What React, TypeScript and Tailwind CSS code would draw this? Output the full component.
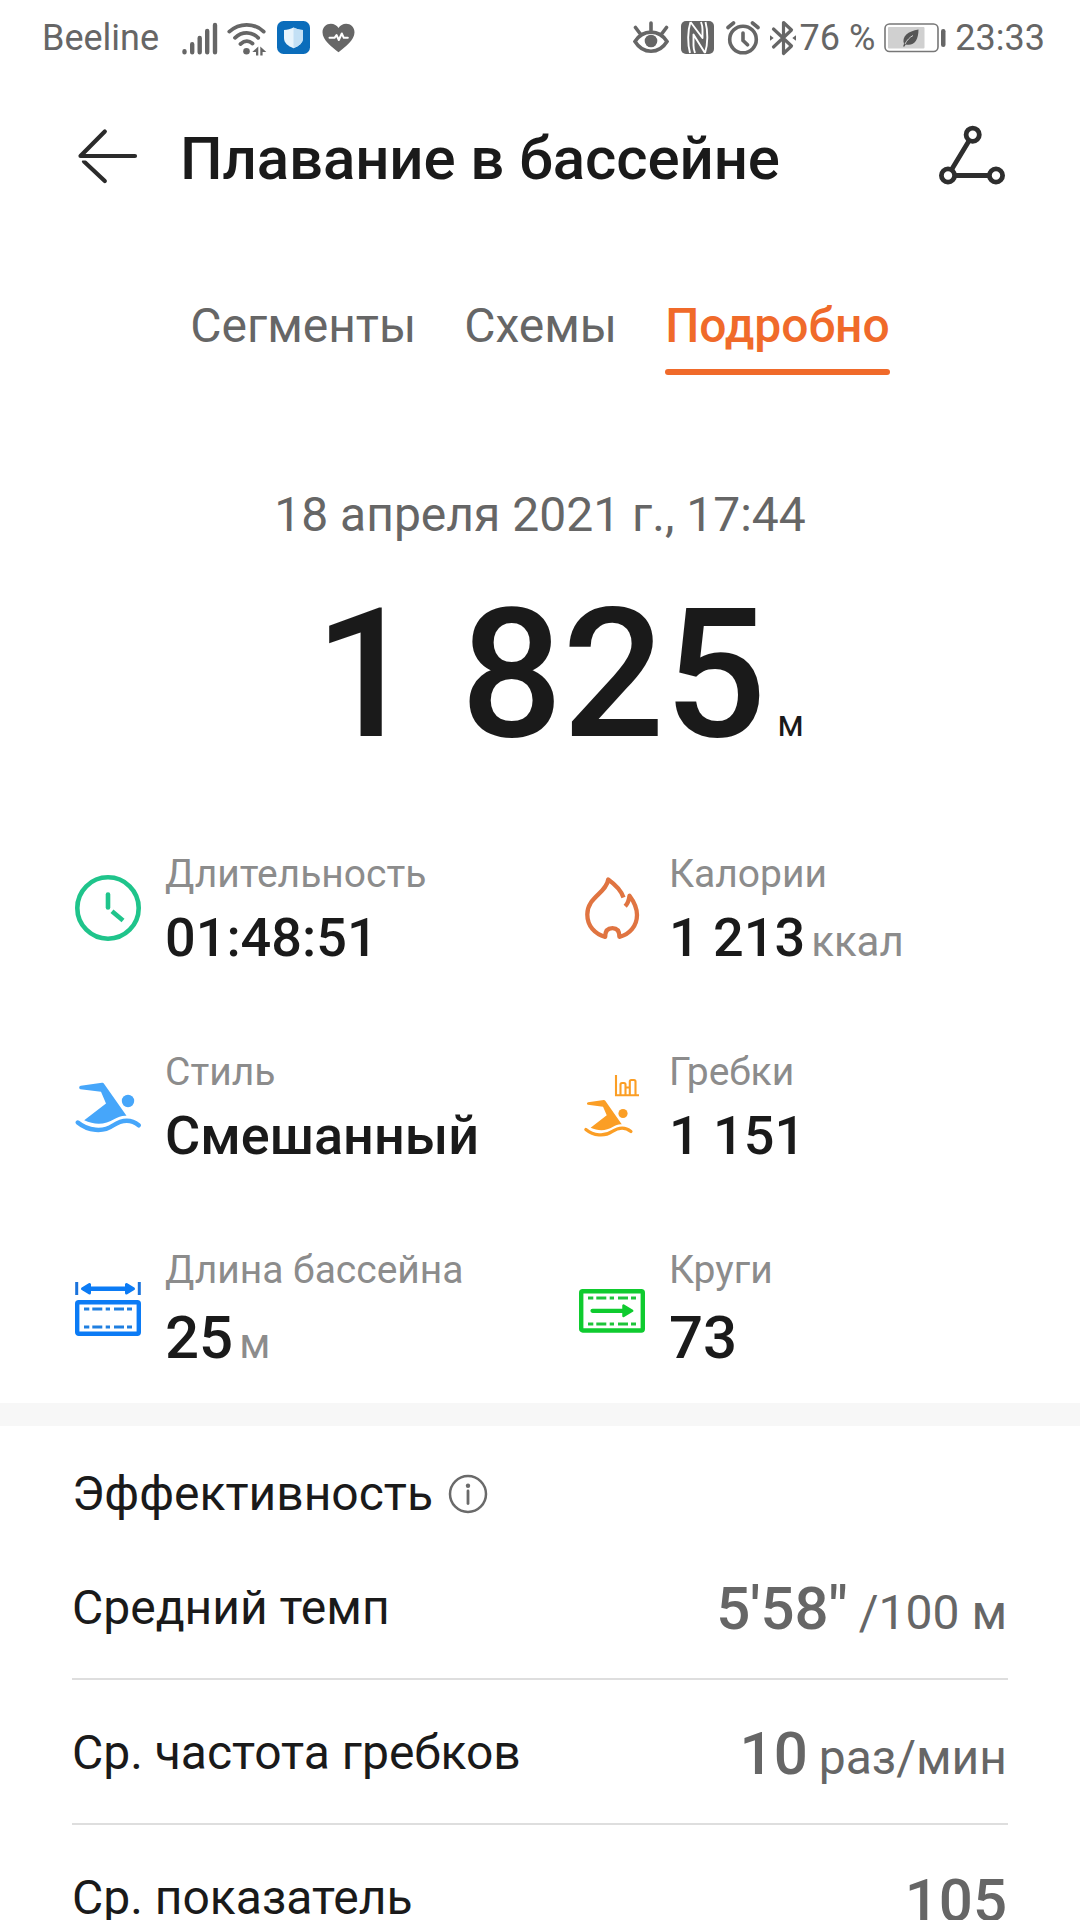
import type { ReactNode } from 'react';

const DASHES = [[9, 14.3], [17.3, 27.3], [30.7, 35], [39, 49], [52, 57]];

/* ---------- status bar icons ---------- */

function SignalIcon() {
  return (
    <svg width="36" height="36" viewBox="0 0 36 36" stroke="#666" strokeWidth="4.4" strokeLinecap="round">
      <path d="M2.5 32.2v-1M10.2 32.2v-8M17.7 32.2V18M25.2 32.2V11M33 32.2V5" />
    </svg>
  );
}

function WifiIcon() {
  return (
    <svg width="40" height="36" viewBox="0 0 40 36" fill="none" stroke="#666" strokeWidth="3.8" strokeLinecap="round">
      <path d="M2.3 11.6C12.5 2.500 27 2.500 36.700 11.600M8 17.800C15 11.200 24.500 11.200 31.200 17.800M13.500 24C17.500 20.500 22 20.500 25.500 23.500" />
      <circle cx="19.500" cy="31.300" r="3.300" fill="#666" stroke="none" />
      <path d="M25.300 32l6-5.500v9h-2.300v-3.500zM33.300 26.500l6 5.500h-3.700v3.500h-2.300z" fill="#666" stroke="none" />
    </svg>
  );
}

function ShieldIcon() {
  return (
    <svg width="33" height="33" viewBox="0 0 33 33">
      <rect width="33" height="33" rx="6.500" fill="#0b6dbb" />
      <path d="M16.500 6.500c3 1.600 6 2.300 9.500 2.600v8c0 5-4 8-9.500 10.200C11 25.100 7 22.100 7 17.100v-8c3.500-.300 6.500-1 9.500-2.600z" fill="#e8f4fc" />
      <path d="M16.500 6.500c3 1.600 6 2.300 9.500 2.600v8c0 5-4 8-9.500 10.200z" fill="#c3e0f5" />
    </svg>
  );
}

function HeartIcon() {
  return (
    <svg width="33" height="30" viewBox="0 0 33 30">
      <path d="M16.500 29.300C10 24 .500 17.500.500 9.300.500 4 4.500.800 8.800.800c3.300 0 6.200 1.700 7.700 4.300 1.500-2.600 4.400-4.300 7.700-4.300 4.300 0 8.300 3.200 8.300 8.500 0 8.200-9.500 14.700-16 20z" fill="#666" />
      <path d="M7.500 14.800h5l2-2.800 2.300 5 3-6.500 2 4.300h4" fill="none" stroke="#fff" strokeWidth="2" strokeLinejoin="round" strokeLinecap="round" />
    </svg>
  );
}

function EyeIcon() {
  return (
    <svg width="36" height="33" viewBox="0 0 36 33" fill="none" stroke="#666" strokeWidth="3.600" strokeLinecap="round">
      <path d="M2 20.500C10 8 26 8 34 20.500 26 33.500 10 33.500 2 20.500zM18 2v7M2.500 6.500l4.500 6M33.500 6.500l-4.500 6" />
      <circle cx="18" cy="20" r="6.300" fill="#666" stroke="none" />
    </svg>
  );
}

function NfcIcon() {
  return (
    <svg width="33" height="33" viewBox="0 0 33 33">
      <rect width="33" height="33" rx="5" fill="#666" />
      <g fill="none" stroke="#fff" strokeWidth="1.900" strokeLinejoin="round">
        <path d="M9.500 1C6.500 10 6.500 23 9 32M9.500 1L21.500 17V8.500C21.500 5.500 21 3.500 20 1" />
        <path d="M24 32C27 23 27 10 24.500 1M24 32L12.500 13.500V24.500C12.500 27.500 13 29.500 14 32" />
      </g>
    </svg>
  );
}

function AlarmIcon() {
  return (
    <svg width="34" height="34" viewBox="0 0 34 34" fill="none" stroke="#666" strokeWidth="3.600" strokeLinecap="round">
      <circle cx="17" cy="18.500" r="13.300" />
      <path d="M17 12v7.500l4.500 4.300M2 6.500L7.500 2M32 6.500L26.500 2" />
    </svg>
  );
}

function BluetoothIcon() {
  return (
    <svg width="28" height="36" viewBox="0 0 28 36" fill="none" stroke="#666" strokeWidth="3.200" strokeLinejoin="round">
      <path d="M4.500 9L22.500 26 14.500 33.500V2.500L22.500 10 4.500 27" strokeLinecap="round" />
      <path d="M1 15.200L4.700 18 1 20.800zM27 15.200L23.300 18 27 20.800z" fill="#666" stroke="none" />
    </svg>
  );
}

function BatteryIcon() {
  return (
    <svg width="62" height="30" viewBox="0 0 62 30">
      <rect x="1" y="1" width="53" height="27.500" rx="4.500" fill="none" stroke="#777" strokeWidth="1.600" />
      <rect x="4" y="4" width="36.500" height="21.500" rx="1" fill="#d0d0d0" />
      <rect x="57" y="6" width="4.500" height="18" rx="2.200" fill="#666" />
      <path d="M34.500 6.500C24 8.500 17.500 13 20 21l-1 2.500 1.500 0 1.200-2C30 23.500 34.500 17 34.500 6.500z" fill="#555" />
      <path d="M21 21c2-4 4.500-6.500 8-8.500" fill="none" stroke="#d0d0d0" strokeWidth="1" />
    </svg>
  );
}

/* ---------- header icons ---------- */

function BackIcon() {
  return (
    <svg width="60" height="56" viewBox="0 0 60 56" fill="none" stroke="#2b2b2b" strokeWidth="4.200" strokeLinecap="round">
      <path d="M57 28H2.500L26.800 3.500" strokeLinejoin="round" />
      <path d="M6 33.500l20.800 19.500" />
      <path d="M0 31.400h12" stroke="#fff" strokeWidth="2.200" strokeLinecap="butt" />
    </svg>
  );
}

function RouteIcon() {
  return (
    <svg width="68" height="60" viewBox="0 0 68 60" fill="none" stroke="#2e2e2e" strokeWidth="4.800">
      <circle cx="34.700" cy="9.700" r="6.600" />
      <circle cx="10" cy="50.500" r="6.600" />
      <circle cx="58" cy="50.500" r="6.600" />
      <path d="M31.200 15.500L13.500 44.700M16.500 50.500h35" />
    </svg>
  );
}

/* ---------- stat icons, all 66x66 ---------- */

function StatSvg({ children }: { children: ReactNode }) {
  return (
    <svg className="mt-[32px] shrink-0" width="66" height="66" viewBox="0 0 66 66" fill="none">
      {children}
    </svg>
  );
}

function Swimmer({ color }: { color: string }) {
  return (
    <>
      <path
        d="M5.800 12.700L27 9.800c1 0 1.500.200 2 .900L51.500 42.700c-5-.300-8 1-12 3.300-9.500 6-20 6-30.300 1.300L31 30.500 26 18.700 5.500 16.200c-1.800-.400-1.700-3.200.300-3.500z"
        fill={color}
      />
      <circle cx="53" cy="28" r="6.200" fill={color} />
      <path d="M2.800 49.500C13 58 28 59.500 38 52.500 48 46 56 46 63.700 52.300" stroke={color} strokeWidth="4.400" strokeLinecap="round" />
    </>
  );
}

function LaneDashes({ y, color }: { y: number; color: string }) {
  return (
    <>
      {DASHES.map(([from, to]) => (
        <path key={from} d={`M${from} ${y}H${to}`} stroke={color} strokeWidth="3" />
      ))}
    </>
  );
}

function ClockIcon() {
  return (
    <StatSvg>
      <circle cx="33" cy="33" r="30.700" stroke="#1fc48b" strokeWidth="4.600" />
      <path d="M33 19.500V32.500" stroke="#1fc48b" strokeWidth="4.600" strokeLinecap="round" />
      <path d="M37 36.300L48 45.500" stroke="#1fc48b" strokeWidth="4.600" />
    </StatSvg>
  );
}

function FlameIcon() {
  return (
    <StatSvg>
      <path
        d="M44.500 22.500C42 15 35.500 9 29.200 4.500 27.500 18 8.300 22 8.300 39.500c0 11.500 7.500 19.500 17.900 22.300 0-5.800 2.600-8.600 7.200-8.600s7 2.800 7 8.600C50.500 59.500 58 51 58 40c0-8.500-3.500-14-7.500-19.300-.500 4.500-1.500 7.500-4.300 10.600"
        stroke="#e07441"
        strokeWidth="4.300"
        strokeLinejoin="round"
      />
    </StatSvg>
  );
}

function StyleIcon() {
  return (
    <StatSvg>
      <Swimmer color="#46a6fa" />
    </StatSvg>
  );
}

function StrokesIcon() {
  return (
    <StatSvg>
      <g transform="translate(4.800 19.800) scale(.74)">
        <Swimmer color="#fb9e25" />
      </g>
      <path d="M37 2v20.200h23M41.500 22V11.500q0-1.500 1.500-1.500h2q1.500 0 1.500 1.500V22M46.500 14.500h4M50.800 22V8.500q0-1.500 1.500-1.500h2.700q1.500 0 1.500 1.500V22" stroke="#fb9e25" strokeWidth="2.100" />
    </StatSvg>
  );
}

function PoolIcon() {
  return (
    <StatSvg>
      <path d="M1.700 11v13M64.300 11v13" stroke="#1a73dc" strokeWidth="3" />
      <path d="M12 17.700h42" stroke="#0b7bf5" strokeWidth="4.400" />
      <path d="M7.500 17.700l7-4.200v8.400zM58.500 17.700l-7-4.200v8.400z" fill="#0b7bf5" stroke="#0b7bf5" strokeWidth="3" strokeLinejoin="round" />
      <rect x="2.200" y="31.200" width="61.600" height="31.600" rx="1.500" stroke="#0b7bf5" strokeWidth="4.400" />
      <LaneDashes y={38} color="#1f7fe0" />
      <LaneDashes y={56} color="#1f7fe0" />
    </StatSvg>
  );
}

function LapsIcon() {
  return (
    <StatSvg>
      <rect x="2.200" y="20.200" width="61.600" height="39.300" rx="1.500" stroke="#0fcb2f" strokeWidth="4.400" />
      <LaneDashes y={27} color="#1ec43a" />
      <LaneDashes y={53} color="#1ec43a" />
      <path d="M13.500 39.800h32" stroke="#0fcb2f" strokeWidth="4.200" strokeLinecap="round" />
      <path d="M44.500 34.600v10.400l8.700-5.200z" fill="#0fcb2f" stroke="#0fcb2f" strokeWidth="2.500" strokeLinejoin="round" />
    </StatSvg>
  );
}

function InfoIcon() {
  return (
    <svg width="40" height="40" viewBox="0 0 40 40" fill="none" stroke="#6a6a6a">
      <circle cx="20" cy="20" r="18" strokeWidth="2.500" />
      <path d="M20 17v12.500" strokeWidth="2.800" strokeLinecap="round" />
      <circle cx="20" cy="11.700" r="2.200" fill="#6a6a6a" stroke="none" />
    </svg>
  );
}

const stats = [
  { label: 'Длительность', value: '01:48:51', unit: '', icon: ClockIcon },
  { label: 'Калории', value: '1 213', unit: 'ккал', icon: FlameIcon },
  { label: 'Стиль', value: 'Смешанный', unit: '', icon: StyleIcon },
  { label: 'Гребки', value: '1 151', unit: '', icon: StrokesIcon },
  { label: 'Длина бассейна', value: '25', unit: 'м', icon: PoolIcon, large: true },
  { label: 'Круги', value: '73', unit: '', icon: LapsIcon, large: true },
];

const rows = [
  { label: 'Средний темп', value: '5\'58"', unit: '/100 м' },
  { label: 'Ср. частота гребков', value: '10', unit: 'раз/мин' },
  { label: 'Ср. показатель', value: '105', unit: '' },
];

export default function App() {
  return (
    <div className="w-[1080px] h-[1920px] overflow-hidden bg-white font-['Roboto',sans-serif] text-[#1a1a1a]">
      {/* Status bar */}
      <div className="h-[75px] pl-[42px] pr-[35px] flex items-center justify-between text-[36px] text-[#666]">
        <div className="flex items-center">
          <span className="w-[140px]">Beeline</span>
          <SignalIcon />
          <div className="ml-[9px]"><WifiIcon /></div>
          <div className="ml-[10px]"><ShieldIcon /></div>
          <div className="ml-[12px]"><HeartIcon /></div>
        </div>
        <div className="flex items-center">
          <EyeIcon />
          <div className="ml-[12px]"><NfcIcon /></div>
          <div className="ml-[12px]"><AlarmIcon /></div>
          <div className="ml-[9px]"><BluetoothIcon /></div>
          <span className="ml-[3px]">76 %</span>
          <div className="ml-[9px]"><BatteryIcon /></div>
          <span className="ml-[9px]">23:33</span>
        </div>
      </div>

      {/* Header */}
      <div className="h-[165px] pl-[78px] pr-[74px] flex items-center">
        <div className="mb-[4px]"><BackIcon /></div>
        <h1 className="ml-[42px] mt-[2px] flex-1 text-[60px] leading-[72px] font-medium tracking-[-0.1px] whitespace-nowrap">Плавание в бассейне</h1>
        <div className="mb-[6px]"><RouteIcon /></div>
      </div>

      {/* Tabs */}
      <div className="h-[195px] pt-[57px] flex justify-center gap-[48px] text-[48px] leading-[58px] text-[#666]">
        <span className="h-[78px]">Сегменты</span>
        <span className="h-[78px]">Схемы</span>
        <div className="flex flex-col gap-[14px] text-[#f06a2a] font-medium">
          <span>Подробно</span>
          <div className="h-[6px] rounded-full bg-[#f06a2a]" />
        </div>
      </div>

      {/* Distance */}
      <div className="h-[408px] pt-[51px] flex flex-col items-center">
        <p className="text-[48px] leading-[58px] text-[#666]">18 апреля 2021 г., 17:44</p>
        <div className="mt-[26px] pl-[38px] flex items-baseline leading-[210px]">
          <span className="text-[180px] font-medium tracking-[-0.4px]">1 825</span>
          <span className="ml-[11px] text-[36px]">м</span>
        </div>
      </div>

      {/* Stats */}
      <div className="h-[560px] pl-[75px] grid grid-cols-[504px_1fr] auto-rows-[198px]">
        {stats.map(({ label, value, unit, large, icon: Icon }) => (
          <div key={label} className="flex gap-[24px]">
            <Icon />
            <div className="pt-[9px] whitespace-nowrap">
              <p className="text-[39px] leading-[44px] text-[#8c8c8c]">{label}</p>
              <div className={`flex items-baseline gap-[6px] leading-[84px] font-medium ${large ? 'pt-[4px] text-[60px]' : 'text-[54px]'}`}>
                <span>{value}</span>
                {unit && <span className="text-[42px] font-normal text-[#8c8c8c]">{unit}</span>}
              </div>
            </div>
          </div>
        ))}
      </div>

      <div className="h-[23px] bg-[#f7f7f7]" />

      {/* Efficiency */}
      <div className="px-[72px]">
        <div className="h-[109px] pt-[27px] flex items-center gap-[15px]">
          <h2 className="text-[48px] leading-[58px]">Эффективность</h2>
          <InfoIcon />
        </div>
        {rows.map(row => (
          <div key={row.label} className="h-[145px] pt-[3px] pr-px flex items-center justify-between border-b-2 border-[#dedede] text-[48px] leading-[72px]">
            <span>{row.label}</span>
            <div className="mt-[6px] flex items-baseline gap-[11px] text-[#666]">
              <span className="text-[60px] font-medium">{row.value}</span>
              {row.unit && <span>{row.unit}</span>}
            </div>
          </div>
        ))}
      </div>
    </div>
  );
}
